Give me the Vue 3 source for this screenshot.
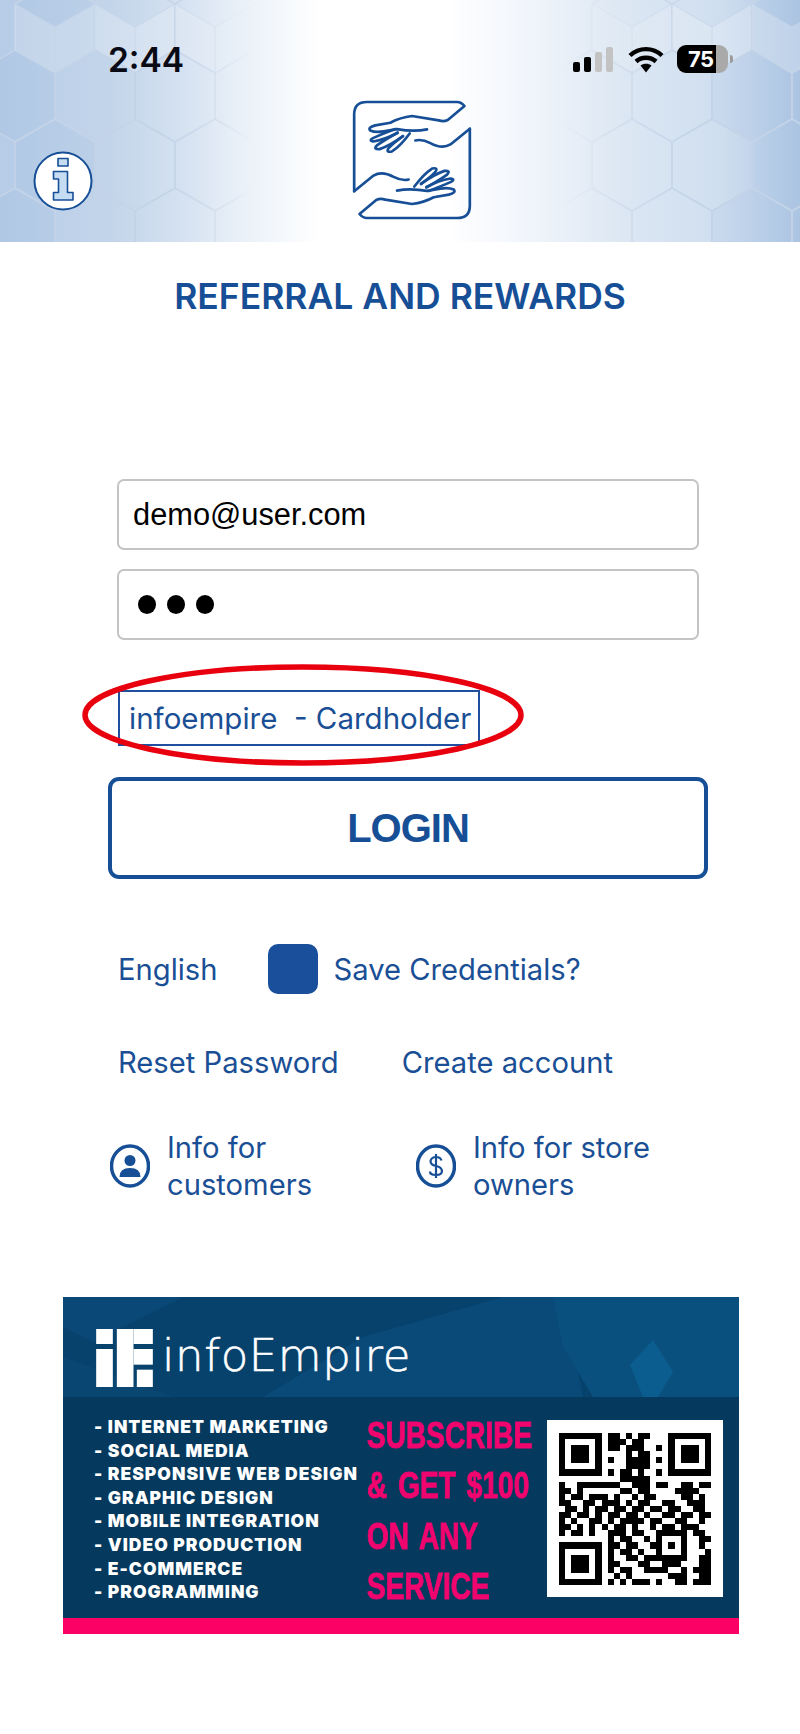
<template>
  <div class="page">
    <header class="top">
      <svg class="hexes" width="800" height="242" viewBox="0 0 800 242">
        <g v-for="(h, i) in hexes" :key="i">
          <polygon :points="h.outline" class="hex" :class="{ dark: h.dark }" />
          <polygon v-if="h.lit" :points="h.faceL" class="face" />
          <polygon v-if="h.lit" :points="h.faceR" class="face" />
          <polyline :points="h.inner" class="hex-line" />
        </g>
      </svg>
      <div class="status">
        <span class="time">2:44</span>
        <div class="status-icons">
          <div class="signal">
            <i class="b1"></i><i class="b2"></i><i class="b3 off"></i><i class="b4 off"></i>
          </div>
          <svg class="wifi" width="36" height="27" viewBox="0 0 36 27">
            <path d="M2 9.5C11 1 25 1 34 9.5" />
            <path d="M8 15.5C13.5 10.5 22.5 10.5 28 15.5" />
            <path class="wedge" d="M12.5 19.5C15.5 17 20.5 17 23.5 19.5L18 26.5Z" />
          </svg>
          <div class="battery">
            <div class="level"><span>75</span></div>
            <div class="rest"></div>
          </div>
          <div class="tip"></div>
        </div>
      </div>
      <div class="brand">
        <svg class="info" width="60" height="60" viewBox="0 0 60 60">
          <circle cx="30" cy="30" r="28.5" fill="#fff" stroke="#174f97" stroke-width="2" />
          <path class="i-glyph" d="M25 7.5H35V15H25Z" />
          <path class="i-glyph" d="M20.5 20.5H34.5V41.5H40V49H20.5V41.5H25.5V28H20.5Z" />
        </svg>
        <svg class="logo" width="116" height="116" viewBox="42 38 346 347">
          <g v-for="r in [0, 180]" :key="r" class="logo-lines" :transform="`rotate(${r} 215 211.5)`">
            <path d="M42 305V75Q42 38 80 38H350Q362 38 372 50L322 92Q310 98 295 93L215 80Q180 84 150 100L105 108Q82 114 90 123Q105 130 130 126L170 119Q220 128 260 120" />
            <path d="M42 305L100 258Q125 243 160 262Q185 275 205 270" />
            <path d="M165 119Q130 132 98 146Q84 154 100 156Q135 150 172 130" />
            <path d="M172 130Q135 150 110 168Q98 180 118 179Q150 168 188 140" />
            <path d="M188 140Q160 160 145 176Q136 190 155 186Q180 170 208 132" />
          </g>
        </svg>
        <div></div>
      </div>
    </header>

    <h1 class="title">REFERRAL AND REWARDS</h1>

    <form class="form" @submit.prevent>
      <div class="field email">demo@user.com</div>
      <div class="field password">
        <span v-for="n in 3" :key="n" class="dot"></span>
      </div>
      <div class="holder-wrap">
        <div class="holder">infoempire &nbsp;- Cardholder</div>
        <svg class="oval" width="450" height="112" viewBox="0 0 450 112">
          <ellipse cx="225" cy="56" rx="218" ry="48" />
        </svg>
      </div>
    </form>

    <button type="button" class="login">LOGIN</button>

    <div class="row prefs">
      <span>English</span>
      <span class="check"></span>
      <span class="save">Save Credentials?</span>
    </div>

    <div class="row links">
      <span>Reset Password</span>
      <span>Create account</span>
    </div>

    <div class="info-row">
      <div class="info-item">
        <svg width="40" height="44" viewBox="0 0 40 44">
          <ellipse cx="20" cy="22" rx="18.5" ry="20" class="ring" />
          <circle cx="20" cy="16.5" r="5.5" class="solid" />
          <path d="M9.5 33Q9.5 24 20 24T30.5 33Z" class="solid" />
        </svg>
        <span>Info for<br />customers</span>
      </div>
      <div class="info-item">
        <svg width="40" height="44" viewBox="0 0 40 44">
          <ellipse cx="20" cy="22" rx="18.5" ry="20" class="ring" />
          <path d="M25.5 16.5Q24.5 13 20 13T14.5 17Q14.5 21 20 22T26 27Q26 31 20 31T14 27.5M20 10V34" class="dollar" />
        </svg>
        <span>Info for store<br />owners</span>
      </div>
    </div>

    <section class="banner">
      <div class="banner-top">
        <svg class="facets" width="676" height="100" viewBox="0 0 676 100">
          <polygon points="0,0 120,0 30,45 0,30" fill="#0a4877" />
          <polygon points="200,100 300,40 440,0 500,0 520,100" fill="#094a79" />
          <polygon points="490,0 676,0 676,100 530,100 500,50" fill="#09507f" />
          <polygon points="567,68 590,43 610,75 595,100 580,100" fill="#0c5d8f" />
          <polygon points="0,60 110,100 0,100" fill="#094672" />
        </svg>
        <svg class="mark" width="57" height="58" viewBox="0 0 170 174">
          <rect x="0" y="0" width="50" height="45" />
          <rect x="0" y="60" width="50" height="114" />
          <rect x="62" y="0" width="50" height="174" />
          <rect x="112" y="0" width="58" height="45" />
          <rect x="112" y="60" width="58" height="47" />
          <rect x="122" y="122" width="48" height="52" />
        </svg>
        <span class="wordmark">infoEmpire</span>
      </div>
      <div class="banner-body">
        <ul class="services">
          <li v-for="s in services" :key="s">- {{ s }}</li>
        </ul>
        <div class="offer">
          <span v-for="l in offer" :key="l">{{ l }}</span>
        </div>
        <div class="qr">
          <svg width="152" height="152" viewBox="0 0 25 25" shape-rendering="crispEdges">
            <path :d="qrPath" fill="#000" />
          </svg>
        </div>
      </div>
      <div class="banner-bar"></div>
    </section>
  </div>
</template>

<script setup>
const services = [
  "INTERNET MARKETING",
  "SOCIAL MEDIA",
  "RESPONSIVE WEB DESIGN",
  "GRAPHIC DESIGN",
  "MOBILE INTEGRATION",
  "VIDEO PRODUCTION",
  "E-COMMERCE",
  "PROGRAMMING",
];

const offer = ["SUBSCRIBE", "& GET $100", "ON ANY", "SERVICE"];

const qrRows = [
  "1111111011010110001111111",
  "1000001011101100001000001",
  "1011101011011100101011101",
  "1011101000010110001011101",
  "1011101010011110101011101",
  "1000001000011110001000001",
  "1111111010110100101111111",
  "0000000000111110000000000",
  "1001111111001110110011011",
  "1101000000110110000111100",
  "1011011101001011000011010",
  "1100110111010110011001110",
  "0110101101101101101100110",
  "1101101011011010011011011",
  "1010011010111101100110010",
  "1101010101101001011011100",
  "1011010011101100111110110",
  "0000000010110010100010011",
  "1111111011011001101010010",
  "1000001010110100100010001",
  "1011101010011011111110011",
  "1011101011000110011100011",
  "1011101010110011110010111",
  "1000001001010000001110011",
  "1111111010101110100110111",
];

const qrPath = qrRows
  .map((row, y) =>
    row
      .split("")
      .map((c, x) => (c === "1" ? `M${x} ${y}h1v1h-1z` : ""))
      .join("")
  )
  .join("");

// honeycomb behind the header, one block for each side
function hexAt(cx, cy) {
  const r = 46;
  const w = 40;
  const pts = [
    [cx, cy - r],
    [cx + w, cy - r / 2],
    [cx + w, cy + r / 2],
    [cx, cy + r],
    [cx - w, cy + r / 2],
    [cx - w, cy - r / 2],
  ];
  const str = (list) => list.map((p) => p.join(",")).join(" ");
  return {
    outline: str(pts),
    faceL: str([pts[5], [cx, cy], [cx, cy + r], pts[4]]),
    faceR: str([pts[1], [cx, cy], [cx, cy + r], pts[2]]),
    inner: cy < 60 ? str([pts[5], [cx, cy], pts[1]]) + ` ${cx},${cy} ${cx},${cy + r}` : "",
    lit: cy < 60,
    dark: cx < 60 || cx > 740,
  };
}

const hexes = [];
for (const [startX, from, to] of [
  [-25, 0, 200],
  [552, 560, 840],
]) {
  for (let row = 0; row < 4; row++) {
    const offset = row % 2 === 0 ? 80 : 40;
    for (let x = startX + offset; x < to + 40; x += 80) {
      if (x >= from - 40) hexes.push(hexAt(x, 27 + row * 69));
    }
  }
}
</script>

<style>
html,
body {
  margin: 0;
  background: #fff;
}
</style>

<style scoped>
.page {
  width: 800px;
  height: 1734px;
  overflow: hidden;
  background: #fff;
  color: #1a4f96;
  font-family: Inter, "Liberation Sans", sans-serif;
}

.top {
  position: relative;
  height: 242px;
  padding-top: 45px;
  box-sizing: border-box;
  background: linear-gradient(
    90deg,
    #b6cce7 0,
    #c3d5ea 14%,
    #d3e0f0 22%,
    #e9f0f8 30%,
    #fff 40%,
    #fff 56%,
    #f1f5fb 66%,
    #dce7f3 78%,
    #cfdeef 90%,
    #b0c8e4 100%
  );
}

.hexes {
  position: absolute;
  left: 0;
  top: 0;
  -webkit-mask-image: linear-gradient(90deg, #000 0, #000 20%, transparent 32%, transparent 70%, #000 88%);
  mask-image: linear-gradient(90deg, #000 0, #000 20%, transparent 32%, transparent 70%, #000 88%);
}

.hex {
  fill: none;
  stroke: #c4d4e8;
  stroke-width: 1.5;
}

.hex.dark {
  fill: rgba(120, 160, 210, 0.07);
}

.face {
  fill: rgba(255, 255, 255, 0.22);
}

.hex-line {
  fill: none;
  stroke: rgba(196, 212, 232, 0.6);
  stroke-width: 1.2;
}

.status {
  position: relative;
  display: flex;
  justify-content: space-between;
  align-items: flex-start;
  height: 30px;
  padding: 0 67px 0 108px;
}

.time {
  font-size: 33.5px;
  line-height: 30px;
  font-weight: 600;
  color: #0a0a14;
}

.status-icons {
  display: flex;
  align-items: flex-start;
}

.signal {
  display: flex;
  align-items: flex-end;
  gap: 4px;
  height: 25px;
  margin: 2px 15px 0 0;
}

.signal i {
  display: block;
  width: 7px;
  border-radius: 2px;
  background: #000;
}

.signal .b1 {
  height: 10px;
}

.signal .b2 {
  height: 15px;
}

.signal .b3 {
  height: 20px;
}

.signal .b4 {
  height: 25px;
}

.signal .off {
  background: #c3c3c3;
}

.wifi {
  margin: 1px 13px 0 0;
}

.wifi path {
  fill: none;
  stroke: #000;
  stroke-width: 4.4;
}

.wifi .wedge {
  fill: #000;
  stroke: none;
}

.battery {
  display: flex;
  width: 51px;
  height: 28px;
  border-radius: 9px;
  overflow: hidden;
}

.level {
  width: 39px;
  padding-left: 11px;
  box-sizing: border-box;
  background: #000;
}

.level span {
  color: #fff;
  font-size: 22px;
  font-weight: 700;
  line-height: 28px;
  letter-spacing: -0.5px;
  white-space: nowrap;
  position: relative;
  z-index: 1;
}

.rest {
  flex: 1;
  background: #a9a9a9;
}

.tip {
  width: 3px;
  height: 8px;
  margin: 10px 0 0 2px;
  border-radius: 0 3px 3px 0;
  background: #9a9a9a;
}

.brand {
  position: relative;
  display: grid;
  grid-template-columns: 1fr auto 1fr;
  margin-top: 27px;
}

.info {
  align-self: end;
  margin: 0 0 7px 33px;
}

.i-glyph {
  fill: #c6dcf2;
  stroke: #174f97;
  stroke-width: 1.6;
  stroke-linejoin: round;
}

.logo {
  overflow: visible;
  margin-left: 23px;
}

.logo-lines path {
  fill: none;
  stroke: #174f97;
  stroke-width: 8;
  stroke-linecap: round;
  stroke-linejoin: round;
}

.title {
  margin: 35px 0 0;
  font-size: 35.5px;
  line-height: 40px;
  font-weight: 600;
  text-align: center;
  color: #174f97;
}

.form {
  padding: 162px 101px 0 117px;
}

.field {
  display: flex;
  align-items: center;
  height: 71px;
  padding-left: 14px;
  box-sizing: border-box;
  border: 2px solid #c4c4c4;
  border-radius: 7px;
  color: #000;
  font-family: "Liberation Sans", sans-serif;
  font-size: 30.8px;
}

.password {
  gap: 11px;
  margin-top: 19px;
  padding-left: 19px;
}

.dot {
  width: 18px;
  height: 19px;
  border-radius: 50%;
  background: #000;
}

.holder-wrap {
  position: relative;
  margin: 50px 0 0 1px;
}

.holder {
  width: 362px;
  height: 56px;
  padding-left: 9px;
  box-sizing: border-box;
  border: 2px solid #1f4f9e;
  font-size: 29.5px;
  line-height: 53px;
  white-space: nowrap;
}

.oval {
  position: absolute;
  left: -40px;
  top: -31px;
}

.oval ellipse {
  fill: none;
  stroke: #e9000f;
  stroke-width: 5.5;
}

.login {
  display: block;
  width: 600px;
  height: 102px;
  margin: 31px 0 0 108px;
  border: 4px solid #174f97;
  border-radius: 11px;
  background: #fff;
  color: #174f97;
  font-family: "Liberation Sans", sans-serif;
  font-size: 40px;
  font-weight: 700;
  letter-spacing: -1px;
}

.row {
  display: flex;
  align-items: center;
  padding-left: 118px;
  font-size: 29.2px;
}

.prefs {
  margin-top: 65px;
  height: 50px;
}

.check {
  width: 50px;
  height: 50px;
  margin-left: 50px;
  border-radius: 10px;
  background: #1a4f9c;
}

.save {
  margin-left: 16px;
}

.links {
  gap: 63px;
  height: 40px;
  margin-top: 48px;
}

.info-row {
  display: grid;
  grid-template-columns: 306px auto;
  margin-top: 47px;
  padding-left: 110px;
}

.info-item {
  display: flex;
  align-items: center;
  gap: 17px;
  font-size: 29.2px;
  line-height: 37px;
}

.ring {
  fill: none;
  stroke: #174f97;
  stroke-width: 3.5;
}

.solid {
  fill: #174f97;
}

.dollar {
  fill: none;
  stroke: #174f97;
  stroke-width: 2.2;
}

.banner {
  width: 676px;
  margin: 94px 0 0 63px;
  background: #053a5e;
}

.banner-top {
  position: relative;
  display: flex;
  align-items: center;
  gap: 9px;
  height: 100px;
  padding: 16px 0 0 33px;
  box-sizing: border-box;
  background: #07426c;
  overflow: hidden;
}

.facets {
  position: absolute;
  left: 0;
  top: 0;
}

.mark {
  position: relative;
  margin-top: 6px;
  fill: #fff;
}

.wordmark {
  position: relative;
  font-family: "DejaVu Sans", sans-serif;
  font-size: 45px;
  font-weight: 200;
  letter-spacing: 0.6px;
  -webkit-text-stroke: 0.6px #fff;
  color: #fff;
}

.banner-body {
  display: grid;
  grid-template-columns: 272px 180px 176px;
  height: 221px;
  padding-left: 32px;
}

.services {
  list-style: none;
  margin: 0 0 0 -1px;
  padding: 18px 0 0;
  font-family: Inter, sans-serif;
  font-size: 17.5px;
  line-height: 23.6px;
  font-weight: 900;
  letter-spacing: 1px;
  color: #fff;
  white-space: nowrap;
}

.offer {
  display: flex;
  flex-direction: column;
  padding-top: 14px;
  color: #f0056f;
  font-family: "Liberation Sans", sans-serif;
  font-size: 36px;
  line-height: 50.4px;
  font-weight: 700;
  white-space: nowrap;
  word-spacing: 4px;
  -webkit-text-stroke: 1px #f0056f;
}

.offer span {
  transform: scaleX(0.78);
  transform-origin: left;
}

.qr {
  display: flex;
  align-items: center;
  justify-content: center;
  width: 176px;
  height: 177px;
  margin-top: 23px;
  background: #fff;
}

.banner-bar {
  height: 16px;
  background: #fb0065;
}
</style>
